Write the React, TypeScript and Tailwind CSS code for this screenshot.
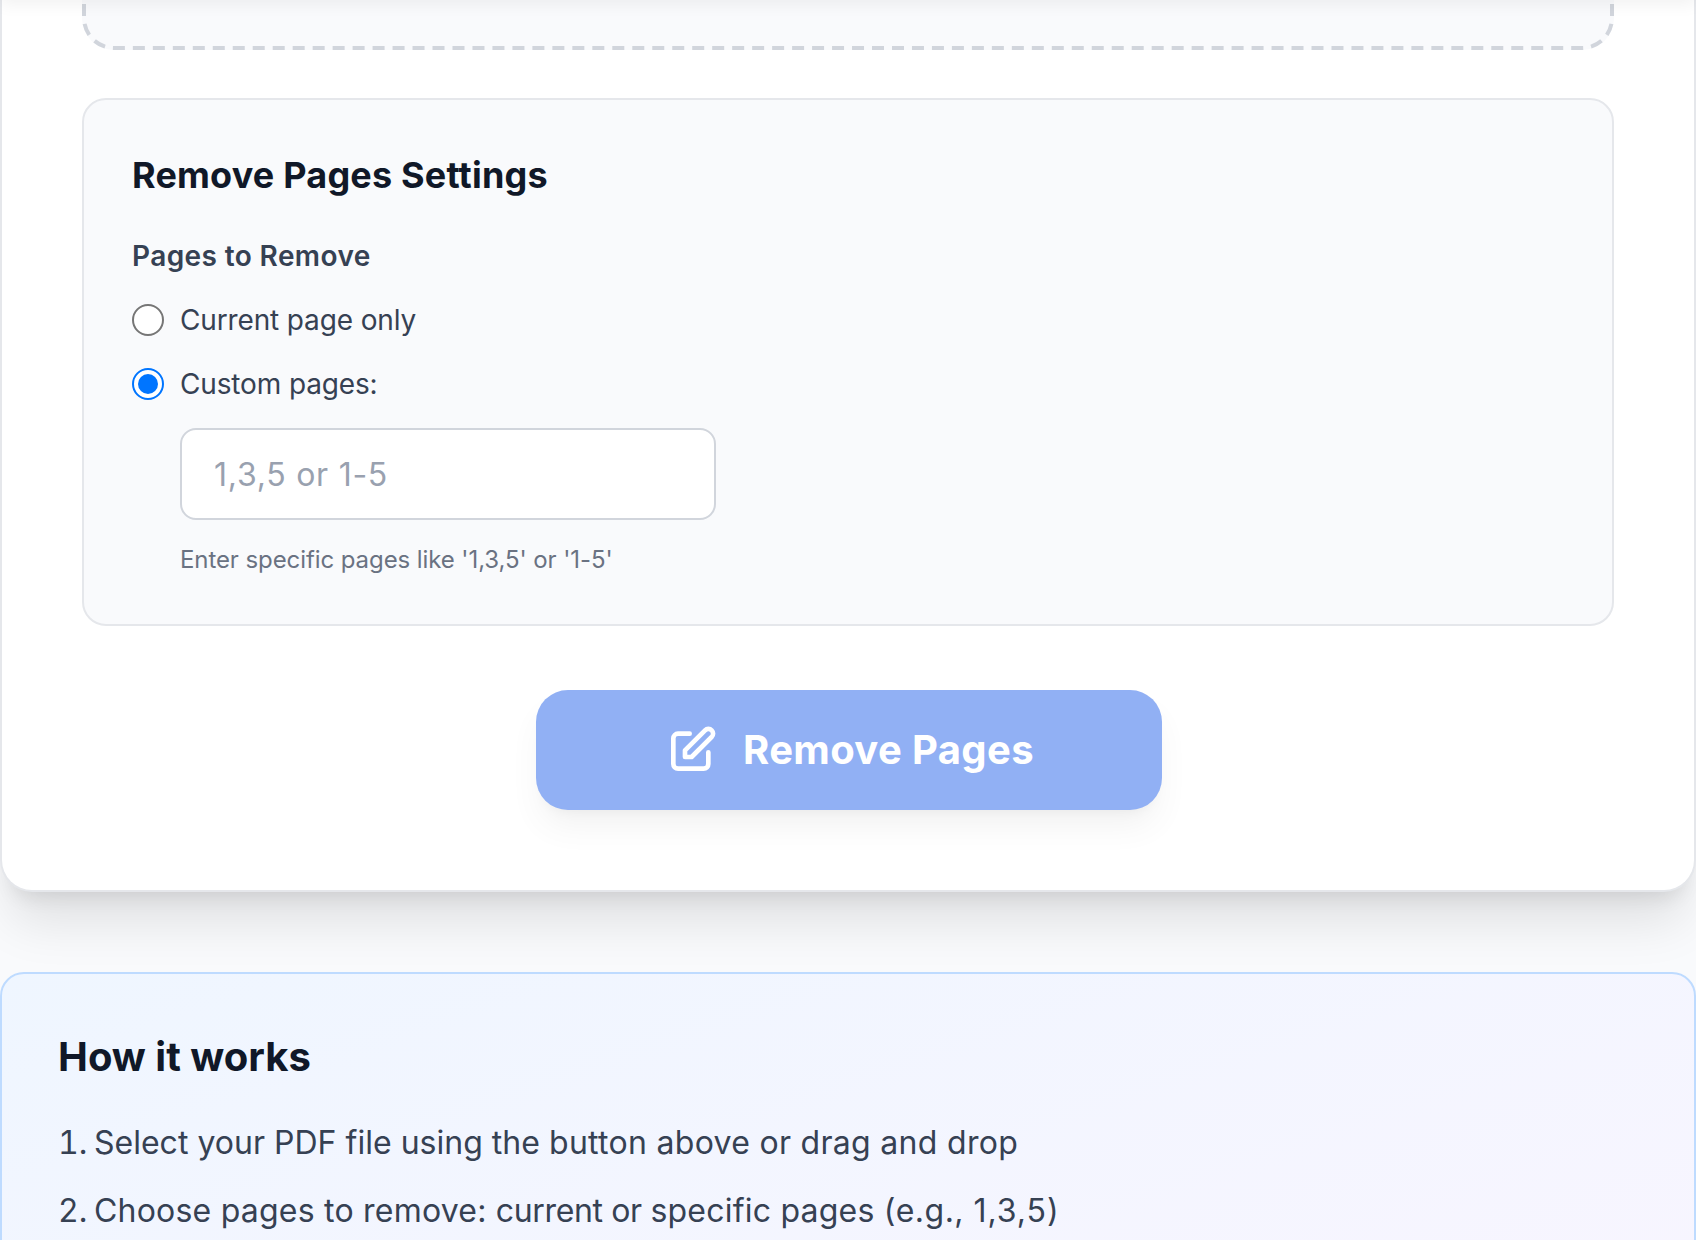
const steps = [
  [
    { text: "Select your PDF file using the ", tracking: "tracking-[0.02px]" },
    { text: "button above or drag and drop", tracking: "tracking-[0.3px]" },
  ],
  [
    { text: "Choose pages to remove: ", tracking: "tracking-[0.22px]" },
    { text: "current or ", tracking: "tracking-[-0.36px]" },
    { text: "specific pages ", tracking: "tracking-[0.22px]" },
    { text: "(e.g., ", tracking: "tracking-[0.5px]" },
    { text: "1,3,5)", tracking: "tracking-[0.95px]" },
  ],
];

function EditIcon() {
  return (
    <svg className="w-14 h-14 shrink-0" fill="none" stroke="currentColor" viewBox="0 0 24 24">
      <path
        strokeLinecap="round"
        strokeLinejoin="round"
        strokeWidth={2}
        d="M11 5H6a2 2 0 00-2 2v11a2 2 0 002 2h11a2 2 0 002-2v-5m-1.414-9.414a2 2 0 112.828 2.828L11.828 15H9v-2.828l8.586-8.586z"
      />
    </svg>
  );
}

/* Lower edge of the drop zone, with a long dash the border style can't give */
function DropZone() {
  return (
    <div className="h-[50px] rounded-b-[32px] bg-[#f9fafc]">
      <svg className="block w-[1532px] h-[50px]" viewBox="0 0 1532 50" fill="none">
        <path
          d="M2 4V18A30 30 0 0 0 32 48H1500A30 30 0 0 0 1530 18V4"
          className="stroke-gray-300"
          strokeWidth={4}
          strokeDasharray="12 7.977"
        />
      </svg>
    </div>
  );
}

function PageRadio({ label, checked = false }: { label: string; checked?: boolean }) {
  return (
    <label className="flex items-center gap-4 text-[28px] leading-10 tracking-[-0.14px] text-gray-700">
      <input
        type="radio"
        name="pages"
        defaultChecked={checked}
        className="appearance-none grid place-content-center w-8 h-8 rounded-full border-2 border-[#767676] bg-white checked:border-[#0075ff] before:block before:w-5 before:h-5 before:rounded-full checked:before:bg-[#0075ff]"
      />
      <span>{label}</span>
    </label>
  );
}

function Settings() {
  return (
    <div className="mt-12 p-12 bg-[#f9fafc] border-2 border-gray-200 rounded-3xl">
      <h3 className="-mt-px mb-[33px] text-[36px] leading-14 tracking-[0.2px] font-bold text-gray-900">
        Remove Pages Settings
      </h3>
      <div className="flex flex-col gap-6">
        <p className="text-[28px] leading-10 tracking-[0.39px] font-semibold text-gray-700">Pages to Remove</p>
        <PageRadio label="Current page only" />
        <PageRadio label="Custom pages:" checked />
        <div className="ml-12">
          <input
            type="text"
            placeholder="1,3,5 or 1-5"
            className="block w-[536px] h-[92px] px-8 text-[32px] tracking-[0.75px] bg-white border-2 border-gray-300 rounded-2xl placeholder:text-gray-400"
          />
          <p className="mt-6 text-2xl leading-8 tracking-[-0.085px] text-gray-500">
            Enter specific pages like '1,3,5' or '1-5'
          </p>
        </div>
      </div>
    </div>
  );
}

export default function App() {
  return (
    <div className="relative h-[1240px] overflow-hidden bg-[#f9fafc] font-['Inter',sans-serif]">
      {/* Sticky header sits just above the fold, only its shadow shows */}
      <div className="absolute z-10 -top-20 inset-x-0 h-20 shadow-[0_4px_16px_rgba(0,0,0,0.06)]" />

      {/* Tool card */}
      <div className="px-20 pb-20 bg-white border-x-2 border-b-2 border-gray-200 rounded-b-[32px] shadow-[0_40px_50px_-10px_rgba(0,0,0,0.1),0_16px_20px_-12px_rgba(0,0,0,0.1)]">
        <DropZone />
        <Settings />
        <div className="mt-16 ml-0.5 flex justify-center">
          <button
            disabled
            className="flex items-center gap-6 w-[626px] h-[120px] pl-32 whitespace-nowrap rounded-[32px] bg-[#2563eb] text-white text-[40px] leading-14 tracking-[0.36px] font-bold opacity-50 shadow-[0_20px_30px_-6px_rgba(0,0,0,0.1),0_8px_12px_-8px_rgba(0,0,0,0.1)]"
          >
            <EditIcon />
            <span className="-ml-px">Remove Pages</span>
          </button>
        </div>
      </div>

      {/* How it works */}
      <div className="relative mt-20 p-14 h-[596px] border-2 border-blue-200 rounded-3xl bg-linear-to-br from-[#eff6ff] to-[#faf5ff]">
        <h3 className="-mt-px mb-8 text-[40px] leading-14 font-bold text-gray-900">How it works</h3>
        <ol className="list-decimal list-inside flex flex-col gap-4 text-[32px] leading-[52px] text-gray-700">
          {steps.map((parts, i) => (
            <li key={i}>
              <span className="-ml-0.5">
                {parts.map((part) => (
                  <span key={part.text} className={part.tracking}>
                    {part.text}
                  </span>
                ))}
              </span>
            </li>
          ))}
        </ol>
      </div>
    </div>
  );
}
